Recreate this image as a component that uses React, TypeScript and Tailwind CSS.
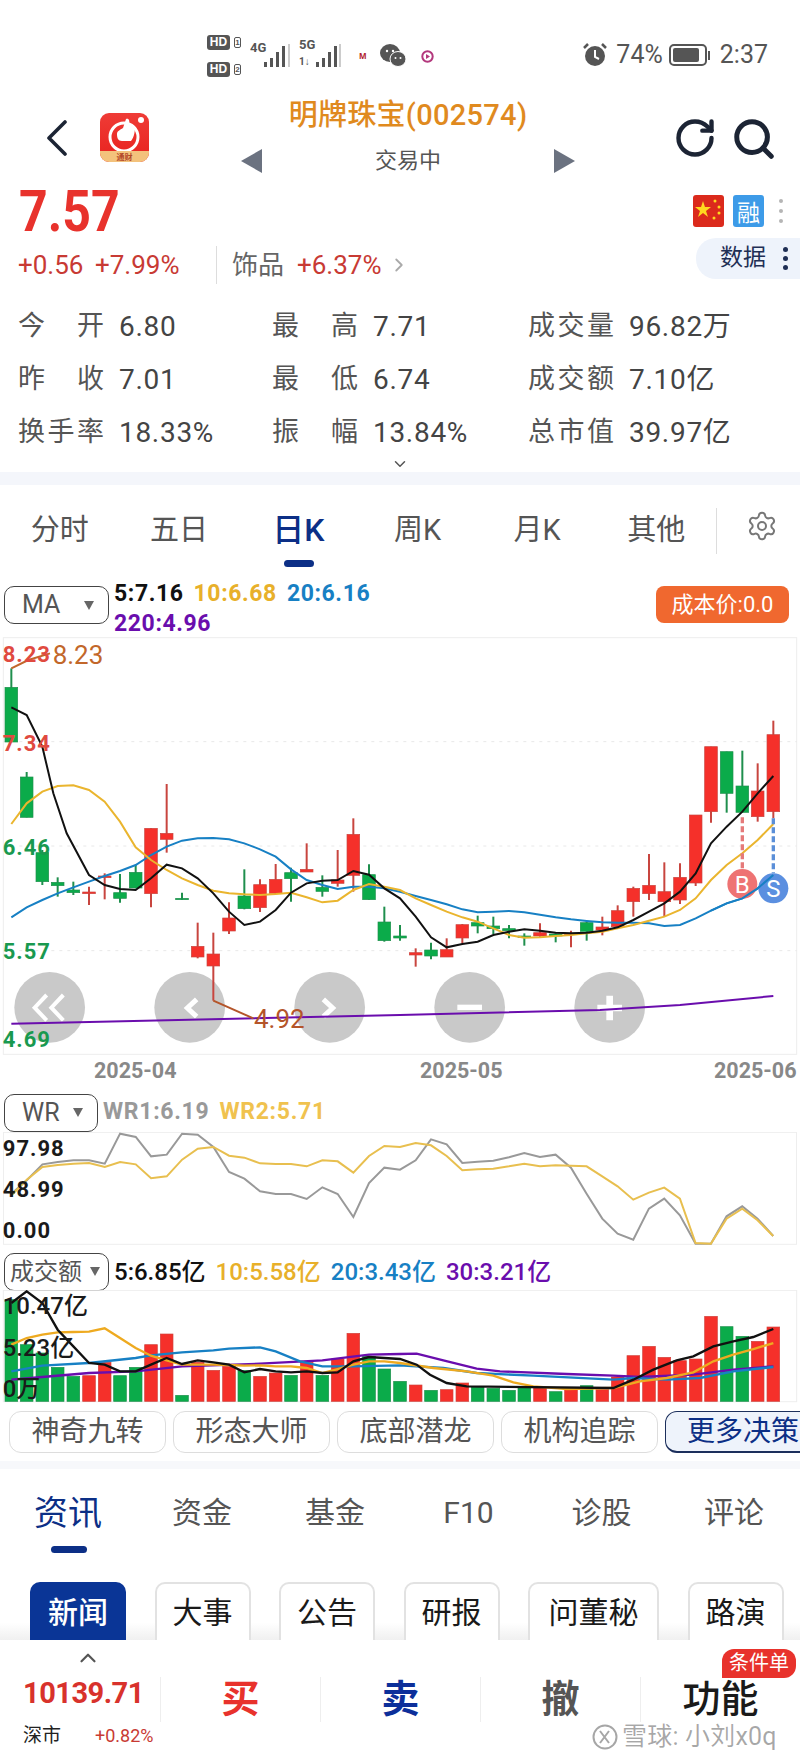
import { ChevronRight, ChevronDown, ChevronUp, RotateCw, Search, Settings } from "lucide-react";

const cjk = "font-['Roboto','Noto_Sans_CJK_SC',sans-serif]";
const RED = "#f5302a";
const GREEN = "#0bab4a";

// [x, up, high, top, bottom, low]
const candles: [number, number, number, number, number, number][] = [
  [34, 0, 295, 352, 516, 516], [80, 0, 606, 621, 742, 742], [127, 0, 840, 848, 935, 945], [173, 0, 922, 937, 947, 980],
  [220, 0, 935, 960, 968, 975], [267, 1, 950, 966, 971, 1005], [314, 1, 910, 918, 923, 988], [360, 0, 912, 968, 985, 998],
  [407, 0, 885, 907, 954, 955], [453, 1, 775, 775, 971, 1012], [500, 1, 642, 790, 808, 848], [546, 0, 968, 985, 989, 989],
  [593, 1, 1058, 1129, 1161, 1165], [640, 1, 1088, 1152, 1188, 1292], [687, 1, 997, 1044, 1083, 1092], [733, 0, 898, 978, 1016, 1018],
  [780, 1, 928, 944, 1013, 1026], [827, 1, 882, 928, 970, 972], [873, 0, 893, 908, 926, 995], [920, 1, 820, 898, 906, 906],
  [967, 0, 916, 952, 964, 980], [1013, 1, 840, 930, 940, 950], [1060, 1, 745, 793, 916, 965], [1107, 0, 883, 914, 989, 989],
  [1153, 0, 1010, 1056, 1112, 1115], [1200, 0, 1065, 1098, 1104, 1112], [1247, 1, 1135, 1148, 1155, 1190], [1293, 0, 1118, 1140, 1158, 1168],
  [1340, 1, 1105, 1139, 1161, 1161], [1387, 1, 1062, 1064, 1104, 1120], [1433, 0, 1037, 1058, 1068, 1090], [1480, 0, 1040, 1068, 1076, 1092],
  [1527, 0, 1065, 1076, 1082, 1105], [1573, 0, 1090, 1098, 1102, 1127], [1620, 1, 1060, 1088, 1098, 1100], [1667, 0, 1090, 1092, 1098, 1117],
  [1713, 1, 1082, 1090, 1094, 1132], [1760, 0, 1054, 1058, 1084, 1112], [1807, 1, 1040, 1071, 1080, 1096], [1853, 1, 1006, 1022, 1070, 1075],
  [1900, 1, 950, 955, 995, 1040], [1947, 1, 852, 946, 971, 990], [1993, 1, 877, 965, 995, 1040], [2040, 1, 880, 922, 990, 1002],
  [2087, 1, 735, 735, 939, 948], [2133, 1, 530, 530, 725, 758], [2180, 0, 545, 545, 670, 728], [2227, 0, 542, 648, 727, 727],
  [2273, 1, 580, 663, 740, 755], [2320, 1, 452, 494, 725, 745],
];

const ma5 = "34,412 80,435 127,530 160,670 200,790 267,915 314,945 360,957 407,960 453,925 500,884 546,895 593,925 640,970 687,1025 733,1065 780,1055 827,1020 873,968 920,940 967,932 1013,930 1060,903 1107,914 1153,955 1200,985 1247,1040 1293,1102 1340,1132 1387,1122 1433,1115 1480,1095 1527,1085 1573,1078 1620,1082 1667,1088 1713,1090 1760,1088 1807,1082 1853,1072 1900,1050 1947,1025 1993,1000 2040,965 2087,910 2133,820 2180,770 2227,725 2273,670 2320,618";
const ma10 = "34,762 80,700 127,665 173,648 220,646 267,660 314,695 360,755 407,832 453,870 500,900 546,925 593,945 640,962 687,970 733,973 780,975 827,972 873,968 920,982 967,997 1013,992 1060,960 1107,942 1153,950 1200,960 1247,985 1293,1005 1340,1025 1387,1042 1433,1055 1480,1075 1527,1095 1573,1103 1620,1102 1667,1098 1713,1095 1760,1090 1807,1085 1853,1075 1900,1065 1947,1052 1993,1040 2040,1020 2087,985 2133,930 2180,885 2227,850 2273,810 2320,762";
const ma20 = "34,1042 80,1012 127,990 173,970 220,952 267,935 314,918 360,903 407,885 453,855 500,830 546,812 593,805 640,804 687,808 733,820 780,838 827,860 873,898 920,930 967,945 1013,957 1060,950 1107,950 1153,955 1200,965 1247,978 1293,990 1340,1003 1387,1018 1433,1027 1480,1025 1527,1023 1573,1027 1620,1034 1667,1042 1713,1048 1760,1053 1807,1057 1853,1058 1900,1058 1947,1060 1993,1068 2040,1065 2087,1045 2133,1022 2180,1000 2227,985 2273,955 2320,915";
const ma220 = "34,1361 1200,1335 1800,1320 2040,1305 2320,1278";

const wr1 = "34,310 80,270 127,222 173,215 220,210 267,210 314,220 360,130 407,140 453,198 500,193 546,130 593,133 640,170 687,245 733,265 780,303 827,311 873,311 920,326 967,291 1013,311 1060,380 1107,278 1153,232 1200,238 1247,210 1293,147 1340,162 1387,218 1433,214 1480,211 1527,201 1573,188 1620,200 1667,193 1713,232 1760,310 1807,385 1853,430 1900,448 1947,355 1993,325 2040,375 2087,460 2133,460 2180,378 2227,348 2273,385 2320,437";
const wr2 = "34,315 80,268 127,230 173,224 220,220 267,218 314,230 360,215 407,222 453,264 500,258 546,208 593,175 640,170 687,196 733,202 780,219 827,221 873,221 920,228 967,210 1013,213 1060,247 1107,197 1153,167 1200,170 1247,158 1293,165 1340,197 1387,240 1433,237 1480,235 1527,228 1573,220 1620,228 1667,225 1713,226 1760,228 1807,258 1853,288 1900,328 1947,307 1993,292 2040,325 2087,458 2133,460 2180,385 2227,355 2273,390 2320,437";

const volTops = [630, 765, 790, 833, 860, 858, 818, 858, 833, 765, 733, 917, 818, 842, 830, 842, 860, 850, 857, 818, 857, 808, 731, 800, 838, 875, 886, 902, 900, 880, 892, 896, 902, 895, 895, 906, 900, 888, 900, 862, 798, 770, 803, 813, 808, 680, 711, 740, 755, 712];
const volUp = [0, 0, 0, 0, 0, 1, 1, 0, 0, 1, 1, 0, 1, 1, 1, 0, 1, 1, 0, 1, 0, 1, 1, 0, 0, 0, 1, 0, 1, 1, 0, 0, 0, 0, 1, 0, 1, 0, 1, 1, 1, 1, 1, 1, 1, 1, 0, 0, 1, 1];
const vol5 = "34,640 80,605 127,640 173,720 220,770 267,820 314,825 360,845 407,845 453,825 500,805 546,823 593,812 640,818 687,825 733,848 780,838 827,845 873,848 920,845 967,850 1013,848 1060,815 1107,802 1153,805 1200,808 1250,825 1290,855 1340,880 1400,890 1840,895 1900,870 1960,840 2030,812 2080,800 2140,770 2200,755 2260,742 2320,718";
const vol10 = "34,765 80,745 127,735 173,728 220,727 267,726 314,716 360,745 407,775 453,798 500,812 546,825 593,825 640,825 687,826 733,828 780,827 827,830 873,830 920,835 967,850 1013,838 1060,825 1107,815 1153,815 1200,820 1300,835 1400,845 1480,858 1540,878 1600,890 1700,898 1840,895 1920,875 2000,865 2080,848 2140,815 2200,795 2260,778 2320,760";
const vol20 = "34,845 127,828 267,820 407,805 453,797 546,788 640,782 687,777 780,773 827,785 900,815 967,830 1060,830 1200,827 1330,835 1430,850 1600,858 1840,870 1900,865 2000,870 2100,865 2200,845 2320,832";
const vol30 = "34,870 127,862 267,850 407,845 546,830 780,822 967,812 1107,795 1200,793 1250,792 1330,812 1430,837 1500,845 1700,853 1840,858 1920,862 2080,855 2200,840 2320,830";

function StatusBar() {
  return (
    <div className="h-[100px] pl-[207px] pr-[32px] pt-[35px] flex items-start text-[#555]">
      <div className="flex flex-col gap-[12px] w-[43px]">
        {[1, 2].map((n) => (
          <div key={n} className="flex items-center gap-[4px]">
            <span className="w-[23px] h-[15px] rounded-[3px] bg-[#555] text-white text-[12px] font-bold leading-[15px] text-center font-['Liberation_Sans',sans-serif]">HD</span>
            <span className="w-[7px] h-[11px] rounded-[2px] border border-[#555] text-[8px] font-bold leading-[9px] text-center font-['Liberation_Sans',sans-serif]">{n}</span>
          </div>
        ))}
      </div>
      <svg width="150" height="40" viewBox="0 0 150 40" className="shrink-0 -mt-[1px]">
        <g fill="#555" fontFamily="Roboto, sans-serif" fontSize="13" fontWeight="700">
          <text x="0" y="18">4G</text>
          <text x="49" y="15">5G</text>
          <text x="49" y="31" fontSize="10">1↓</text>
        </g>
        <g fill="#555">
          <rect x="14" y="28" width="3" height="5" /><rect x="20" y="24" width="3" height="9" /><rect x="26" y="18" width="3" height="15" /><rect x="32" y="12" width="3" height="21" />
          <rect x="38" y="10" width="2" height="23" fill="#ccc" />
          <rect x="66" y="28" width="3" height="5" /><rect x="72" y="24" width="3" height="9" /><rect x="78" y="18" width="3" height="15" /><rect x="84" y="12" width="3" height="21" />
          <rect x="89" y="10" width="2" height="23" fill="#ccc" />
        </g>
      </svg>
      <div className="flex items-center gap-[11px] -ml-[41px] mt-[6px] h-[30px]">
        <span className="w-[10px] text-[#b01c2e] text-[8px] font-bold leading-none">M</span>
        <svg width="26" height="24" viewBox="0 0 26 24">
          <ellipse cx="10" cy="9" rx="10" ry="9" fill="#555" />
          <ellipse cx="18" cy="15" rx="8" ry="7.5" fill="#555" stroke="#fff" strokeWidth="1" />
          <circle cx="7" cy="7" r="1.2" fill="#fff" /><circle cx="13" cy="7" r="1.2" fill="#fff" />
          <circle cx="15.5" cy="14" r="1" fill="#fff" /><circle cx="20.5" cy="14" r="1" fill="#fff" />
        </svg>
        <svg width="13" height="13" viewBox="0 0 13 13" className="ml-[4px]">
          <circle cx="6.5" cy="6.5" r="5.2" fill="none" stroke="#b3387d" strokeWidth="2" />
          <path d="M5 4l4 2.5L5 9z" fill="#b3387d" />
        </svg>
      </div>
      <div className="ml-auto flex items-center h-[44px] mt-[-2px] gap-[8px] font-['Roboto',sans-serif] text-[25px] text-[#555]">
        <svg width="26" height="26" viewBox="0 0 26 26">
          <circle cx="13" cy="14" r="10" fill="#555" />
          <path d="M13 8v7l4 2" stroke="#fff" strokeWidth="2" fill="none" />
          <path d="M2 6l4-4M24 6l-4-4" stroke="#555" strokeWidth="2.5" />
        </svg>
        <span>74%</span>
        <span className="flex items-center ml-[-2px]">
          <span className="w-[38px] h-[22px] rounded-[5px] border-2 border-[#555] p-[2px] flex"><span className="w-[26px] bg-[#555] rounded-[2px]" /></span>
          <span className="w-[2px] h-[9px] bg-[#555] ml-[1px]" />
        </span>
        <span className="ml-[2px]">2:37</span>
      </div>
    </div>
  );
}

function NavBar() {
  return (
    <div className="h-[84px] grid grid-cols-[226px_364px_1fr]">
      <div className="flex items-start pl-[46px]">
        <svg width="21" height="36" viewBox="0 0 21 36" className="mt-[20px]" fill="none" stroke="#1c2434" strokeWidth="3.6" strokeLinecap="round" strokeLinejoin="round">
          <path d="M19 2L3 18l16 16" />
        </svg>
        <div className="ml-[33px] mt-[13px] w-[49px] h-[49px] rounded-[9px] bg-[linear-gradient(#ef3b36,#e8221e)] overflow-hidden flex flex-col items-center">
          <svg width="49" height="38" viewBox="0 0 49 38">
            <ellipse cx="24" cy="24" rx="14" ry="14" fill="none" stroke="#fff" strokeWidth="3" />
            <path d="M22 28c-4 0-5-3-5-7 0-3 3-4 6-6l3-9c3-1 4 2 3 6l5 1c2 3 0 12-3 15z" fill="#fff" />
            <circle cx="41" cy="7" r="3" fill="#fff" />
          </svg>
          <span className="w-full flex-1 bg-[#f3c27c] text-[#b4492a] text-[8px] leading-[11px] text-center font-bold font-['Noto_Sans_CJK_SC',sans-serif]">通财</span>
        </div>
      </div>
      <div className="flex flex-col items-center">
        <div className={`h-[30px] text-[29px] leading-[30px] tracking-[0.3px] text-[#e08a1e] font-medium whitespace-nowrap ${cjk}`}>明牌珠宝(002574)</div>
        <div className="mt-[19px] w-[334px] h-[24px] flex items-center justify-between">
          <span className="w-0 h-0 border-y-[12px] border-y-transparent border-r-[21px] border-r-[#6b7280]" />
          <span className={`text-[22px] leading-[24px] text-[#555] ${cjk}`}>交易中</span>
          <span className="w-0 h-0 border-y-[12px] border-y-transparent border-l-[21px] border-l-[#6b7280]" />
        </div>
      </div>
      <div className="flex items-start pl-[83px] pt-[16px] gap-[14px] text-[#1c2434]">
        <RotateCw className="w-[44px] h-[44px] shrink-0" strokeWidth={2.4} />
        <Search className="w-[46px] h-[46px] shrink-0" strokeWidth={2.6} />
      </div>
    </div>
  );
}

function PriceBlock() {
  return (
    <div className="h-[105px]">
      <div className="h-[54px] pl-[19px] flex items-start">
        <span className="text-[50px] leading-[56px] font-bold text-[#e8322c] font-['Roboto',sans-serif] scale-y-[1.13]">7.57</span>
        <div className="ml-auto mr-[17px] mt-[11px] flex items-center">
          <svg width="31" height="32" viewBox="0 0 31 32" className="rounded-[3px]">
            <rect width="31" height="32" fill="#db2a1c" />
            <polygon points="10,6 12,12 18,12 13,16 15,22 10,18 5,22 7,16 2,12 8,12" fill="#ffd81f" />
            <circle cx="22" cy="6" r="1.5" fill="#ffd81f" /><circle cx="26" cy="12" r="1.5" fill="#ffd81f" /><circle cx="26" cy="18" r="1.5" fill="#ffd81f" /><circle cx="21" cy="23" r="1.5" fill="#ffd81f" />
          </svg>
          <span className="ml-[9px] w-[31px] h-[32px] rounded-[3px] bg-[#3d9be8] text-white text-[23px] leading-[32px] text-center font-['Noto_Sans_CJK_SC',sans-serif]">融</span>
          <span className="ml-[15px] flex flex-col gap-[6px]">
            <span className="w-[4px] h-[4px] rounded-full bg-[#b5b5b5]" /><span className="w-[4px] h-[4px] rounded-full bg-[#b5b5b5]" /><span className="w-[4px] h-[4px] rounded-full bg-[#b5b5b5]" />
          </span>
        </div>
      </div>
      <div className="pl-[18px] flex items-start">
        <div className={`mt-[9px] flex items-center h-[36px] text-[26px] text-[#c83a34] ${cjk}`}>
          <span className="w-[77px]">+0.56</span>
          <span className="w-[121px]">+7.99%</span>
          <span className="w-px h-[38px] bg-[#ddd] mr-[15px]" />
          <span className="text-[#666] w-[65px]">饰品</span>
          <span>+6.37%</span>
          <ChevronRight className="w-[22px] h-[22px] text-[#aaa] ml-[6px]" strokeWidth={2} />
        </div>
        <div className={`ml-auto w-[104px] h-[41px] rounded-l-[20px] bg-[#eef3fb] flex items-center pl-[24px] gap-[17px] text-[23px] text-[#1f2f55] ${cjk}`}>
          数据
          <span className="flex flex-col gap-[4px]">
            <span className="w-[5px] h-[5px] rounded-full bg-[#1f2f55]" /><span className="w-[5px] h-[5px] rounded-full bg-[#1f2f55]" /><span className="w-[5px] h-[5px] rounded-full bg-[#1f2f55]" />
          </span>
        </div>
      </div>
    </div>
  );
}

function Quote({ label, value }: { label: string; value: string }) {
  return (
    <div className="flex items-center h-[53px]">
      <span className="w-[86px] flex justify-between text-[#555] text-[27px]">
        {label.split("").map((c, i) => <span key={i}>{c}</span>)}
      </span>
      <span className="ml-[15px] text-[#444] text-[28px] tracking-[0.7px]">{value}</span>
    </div>
  );
}

function QuoteGrid() {
  const rows = [
    ["今开", "6.80", "最高", "7.71", "成交量", "96.82万"],
    ["昨收", "7.01", "最低", "6.74", "成交额", "7.10亿"],
    ["换手率", "18.33%", "振幅", "13.84%", "总市值", "39.97亿"],
  ];
  return (
    <div className={`pl-[18px] pt-[11px] ${cjk}`}>
      {rows.map((r, i) => (
        <div key={i} className="grid grid-cols-[254px_256px_1fr]">
          <Quote label={r[0]} value={r[1]} />
          <Quote label={r[2]} value={r[3]} />
          <Quote label={r[4]} value={r[5]} />
        </div>
      ))}
      <div className="h-[13px] flex justify-center pr-[18px]"><ChevronDown className="w-[18px] h-[18px] -mt-[4px] text-[#555]" strokeWidth={2} /></div>
    </div>
  );
}

function PeriodTabs() {
  const tabs = ["分时", "五日", "日K", "周K", "月K", "其他"];
  return (
    <div className="h-[98px] border-t-[13px] border-[#f4f6fb] flex items-start pt-[25px]">
      <div className={`w-[716px] grid grid-cols-6 text-[29px] leading-[40px] text-[#555] ${cjk}`}>
        {tabs.map((t, i) => (
          <span key={t} className={`relative text-center ${i === 2 ? "text-[#0c2f86] text-[32px] font-medium" : ""}`}>
            {t}
            {i === 2 && <span className="absolute left-[45px] top-[50px] w-[30px] h-[7px] rounded-full bg-[#0c2f86]" />}
          </span>
        ))}
      </div>
      <span className="w-px h-[46px] -mt-[2px] bg-[#ddd]" />
      <Settings className="ml-[29px] w-[32px] h-[32px] text-[#777]" strokeWidth={1.5} />
    </div>
  );
}

function SelectBox({ label, w, pad = "pl-[17px] pr-[14px]", text = "text-[25px]" }: { label: string; w: string; pad?: string; text?: string }) {
  return (
    <div className={`${w} ${pad} ${text} h-[38px] shrink-0 rounded-[10px] border border-[#444] flex items-center justify-between text-[#555] font-normal whitespace-nowrap tracking-normal ${cjk}`}>
      <span>{label}</span>
      <span className="w-0 h-0 border-x-[5px] border-x-transparent border-t-[9px] border-t-[#666]" />
    </div>
  );
}

function MainChart() {
  const grid = [515, 828, 1142];
  const buttons: [number, string][] = [[149, "«"], [569, "‹"], [989, "›"], [1409, "−"], [1829, "+"]];
  return (
    <svg viewBox="0 201 2400 1254" width="800" height="418" className="block" fontFamily="Roboto, sans-serif">
      <rect x="10" y="203" width="2380" height="1250" fill="none" stroke="#eee" strokeWidth="3" />
      {grid.map((y) => <line key={y} x1="10" x2="2390" y1={y} y2={y} stroke="#e8e8e8" strokeWidth="3" strokeDasharray="9 15" />)}
      {buttons.map(([x, g]) => (
        <g key={x}>
          <circle cx={x} cy="1312" r="106" fill="#c9c9c9" />
          {g === "«" && <path d="M140 1275l-36 38 36 38M190 1275l-36 38 36 38" fill="none" stroke="#fff" strokeWidth="12" />}
          {g === "‹" && <path d="M590 1288l-28 26 28 26" fill="none" stroke="#fff" strokeWidth="15" />}
          {g === "›" && <path d="M970 1288l28 26-28 26" fill="none" stroke="#fff" strokeWidth="15" />}
          {g === "−" && <rect x={x - 37} y="1304" width="74" height="16" fill="#fff" />}
          {g === "+" && <path d={`M${x - 37} 1314h74M${x} 1277v74`} stroke="#fff" strokeWidth="20" />}
        </g>
      ))}
      {candles.map(([x, up, hi, top, bot, lo]) => {
        const c = up ? RED : GREEN;
        const stroke = up ? "#c8453f" : "#1f8f4d";
        return (
          <g key={x}>
            <line x1={x} x2={x} y1={hi} y2={lo} stroke={stroke} strokeWidth="6" />
            <rect x={x - 19} y={top} width="38" height={Math.max(bot - top, 4)} fill={c} stroke={stroke} strokeWidth="2" />
          </g>
        );
      })}
      <polyline points={ma220} fill="none" stroke="#6a0dad" strokeWidth="6" />
      <polyline points={ma20} fill="none" stroke="#1780c4" strokeWidth="6" />
      <polyline points={ma10} fill="none" stroke="#eab52e" strokeWidth="6" />
      <polyline points={ma5} fill="none" stroke="#111" strokeWidth="6" />
      <polyline points="34,295 85,270 150,250" fill="none" stroke="#c2672a" strokeWidth="6" />
      <polyline points="640,1292 760,1345" fill="none" stroke="#b4552a" strokeWidth="6" />
      <text x="158" y="281" fontSize="78" fill="#c2672a">8.23</text>
      <text x="762" y="1375" fontSize="78" fill="#b4552a">4.92</text>
      <g fontSize="66" fontWeight="700" letterSpacing="3">
        <text x="8" y="276" fill="#e04a40">8.23</text>
        <text x="8" y="543" fill="#e04a40">7.34</text>
        <text x="8" y="854" fill="#19994f">6.46</text>
        <text x="8" y="1168" fill="#19994f">5.57</text>
        <text x="8" y="1432" fill="#19994f">4.69</text>
      </g>
      <line x1="2227" x2="2227" y1="742" y2="900" stroke="#e57a7a" strokeWidth="10" strokeDasharray="18 9" />
      <line x1="2320" x2="2320" y1="745" y2="910" stroke="#5b8fd8" strokeWidth="10" strokeDasharray="18 9" />
      <circle cx="2227" cy="942" r="45" fill="#ee7373" />
      <circle cx="2320" cy="955" r="45" fill="#5b8fe0" />
      <text x="2227" y="968" textAnchor="middle" fontSize="72" fill="#fff">B</text>
      <text x="2320" y="981" textAnchor="middle" fontSize="72" fill="#fff">S</text>
      <polyline points="2133,1022 2180,1000 2227,985 2273,955 2320,915" fill="none" stroke="#1780c4" strokeWidth="6" />
    </svg>
  );
}

function WrChart() {
  return (
    <svg viewBox="0 125 2400 340" width="800" height="113.3" className="block" fontFamily="Roboto, sans-serif">
      <rect x="10" y="126" width="2380" height="336" fill="none" stroke="#eee" strokeWidth="3" />
      <polyline points={wr1} fill="none" stroke="#999" strokeWidth="6" />
      <polyline points={wr2} fill="none" stroke="#e8bf4f" strokeWidth="6" />
      <g fontSize="66" fontWeight="700" fill="#1a1a1a" letterSpacing="3">
        <text x="8" y="197">97.98</text>
        <text x="8" y="320">48.99</text>
        <text x="8" y="443">0.00</text>
      </g>
    </svg>
  );
}

function VolumeChart() {
  return (
    <svg viewBox="0 601 2400 338" width="800" height="112.7" className="block" fontFamily="Roboto, 'Noto Sans CJK SC', sans-serif">
      <rect x="10" y="602" width="2380" height="334" fill="none" stroke="#eee" strokeWidth="3" />
      {candles.map(([x], i) => (
        <rect key={x} x={x - 19} y={volTops[i]} width="38" height={935 - volTops[i]} fill={volUp[i] ? RED : GREEN} stroke={volUp[i] ? "#d0423c" : "#1f8f4d"} strokeWidth="2" />
      ))}
      <polyline points={vol30} fill="none" stroke="#6a0dad" strokeWidth="7" />
      <polyline points={vol20} fill="none" stroke="#1780c4" strokeWidth="7" />
      <polyline points={vol10} fill="none" stroke="#eeaa20" strokeWidth="7" />
      <polyline points={vol5} fill="none" stroke="#111" strokeWidth="7" />
      <g fontSize="72" fontWeight="500" fill="#1a1a1a">
        <text x="8" y="674">10.47亿</text>
        <text x="8" y="800">5.23亿</text>
        <text x="8" y="922">0万</text>
      </g>
    </svg>
  );
}

function ChartArea() {
  return (
    <div>
      <div className={`h-[67px] pl-[4px] pt-[16px] pr-[11px] flex items-start text-[23px] leading-[30px] font-bold tracking-[0.6px] ${cjk}`}>
        <SelectBox label="MA" w="w-[105px]" />
        <div className="ml-[5px] -mt-[7px] flex flex-wrap w-[300px] gap-x-[10px]">
          <span className="text-[#111]">5:7.16</span>
          <span className="text-[#e8b02a]">10:6.68</span>
          <span className="text-[#1780c4]">20:6.16</span>
          <span className="text-[#6a0dad]">220:4.96</span>
        </div>
        <div className="ml-auto w-[133px] h-[37px] rounded-[8px] bg-[#f0682f] text-white text-[22px] font-normal leading-[37px] text-center tracking-normal">成本价:0.0</div>
      </div>
      <MainChart />
      <div className="h-[30px] pt-[2px] flex items-center pl-[94px] text-[21.5px] font-bold text-[#888] font-['Roboto',sans-serif]">
        <span className="w-[326px]">2025-04</span>
        <span className="w-[294px]">2025-05</span>
        <span>2025-06</span>
      </div>
      <div className={`mt-[8px] h-[39px] pl-[4px] flex items-center text-[23px] font-bold tracking-[0.7px] ${cjk}`}>
        <SelectBox label="WR" w="w-[94px]" />
        <span className="ml-[5px] text-[#999]">WR1:6.19</span>
        <span className="ml-[10px] text-[#f0c24f]">WR2:5.71</span>
      </div>
      <WrChart />
      <div className={`mt-[8px] h-[37px] pl-[4px] flex items-center text-[24px] font-medium ${cjk}`}>
        <SelectBox label="成交额" w="w-[105px]" pad="pl-[5px] pr-[8px]" text="text-[24px]" />
        <span className="ml-[5px] text-[#111]">5:6.85亿</span>
        <span className="ml-[10px] text-[#e8b02a]">10:5.58亿</span>
        <span className="ml-[10px] text-[#1780c4]">20:3.43亿</span>
        <span className="ml-[10px] text-[#6a0dad]">30:3.21亿</span>
      </div>
      <VolumeChart />
    </div>
  );
}

function StrategyPills() {
  const pills = ["神奇九转", "形态大师", "底部潜龙", "机构追踪"];
  return (
    <div className={`mt-[8px] h-[42px] pl-[9px] flex gap-[7px] overflow-hidden text-[28px] text-[#555] ${cjk}`}>
      {pills.map((p) => (
        <div key={p} className="w-[157px] shrink-0 rounded-[12px] border border-[#ddd] flex items-center justify-center">{p}</div>
      ))}
      <div className="w-[170px] shrink-0 rounded-[12px] border border-[#1c2f5c] border-b-2 bg-[#eef3fb] text-[#0c2f86] pl-[21px] leading-[40px] whitespace-nowrap">更多决策</div>
    </div>
  );
}

function InfoTabs() {
  const tabs = ["资讯", "资金", "基金", "F10", "诊股", "评论"];
  return (
    <div className={`mt-[8px] h-[94px] border-t-[8px] border-[#f7f8fb] grid grid-cols-[136px_132px_134px_133px_133px_1fr] pt-[22px] text-[30px] text-[#555] ${cjk}`}>
      {tabs.map((t, i) => (
        <span key={t} className={`relative text-center h-[44px] leading-[44px] ${i === 0 ? "text-[#0c2f86] text-[34px]" : ""}`}>
          {t}
          {i === 0 && <span className="absolute left-[51px] top-[55px] w-[36px] h-[7px] rounded-full bg-[#0c2f86]" />}
        </span>
      ))}
    </div>
  );
}

function NewsFilter() {
  const items: [string, string][] = [["大事", "w-[96px]"], ["公告", "w-[96px]"], ["研报", "w-[96px]"], ["问董秘", "w-[131px]"], ["路演", "w-[96px]"]];
  return (
    <div className={`mt-[27px] h-[58px] pl-[30px] flex gap-[28.5px] overflow-hidden text-[30px] text-[#1a1a1a] bg-[linear-gradient(#fff_70%,#f0f0f0)] ${cjk}`}>
      <div className="w-[96px] h-[70px] shrink-0 rounded-[10px] bg-[#0a3596] text-white font-medium text-center leading-[62px]">新闻</div>
      {items.map(([t, w]) => (
        <div key={t} className={`${w} h-[70px] shrink-0 rounded-[10px] border-2 border-[#e2e2e2] bg-white text-center leading-[58px]`}>{t}</div>
      ))}
    </div>
  );
}

function BottomBar() {
  const actions: [string, string][] = [["买", "text-[#e8322c] font-bold"], ["卖", "text-[#0c2f9a] font-bold"], ["撤", "text-[#555] font-bold"], ["功能", "text-[#1a1a1a] font-medium"]];
  return (
    <div className={`relative flex-1 bg-white grid grid-cols-[160px_160px_160px_160px_160px] ${cjk}`}>
      <div className="pl-[23px] pt-[5px] flex flex-col">
        <ChevronUp className="ml-[52px] w-[26px] h-[26px] text-[#555]" strokeWidth={2} />
        <div className="mt-[3px] h-[38px] leading-[38px] text-[29px] font-bold text-[#d8322c] tracking-[-0.5px] whitespace-nowrap">10139.71</div>
        <div className="mt-[12px] flex items-center h-[24px]">
          <span className="w-[72px] text-[19px] text-[#222]">深市</span>
          <span className="text-[18px] text-[#c83a34]">+0.82%</span>
        </div>
      </div>
      {actions.map(([t, c]) => (
        <div key={t} className={`mt-[37px] h-[45px] border-l border-[#eee] flex items-center justify-center text-[38px] ${c}`}>{t}</div>
      ))}
      <span className="absolute left-[722px] top-[9px] w-[74px] h-[29px] rounded-[12px] rounded-bl-none bg-[#e8322c] text-white text-[20px] leading-[29px] text-center">条件单</span>
      <div className="absolute left-[592px] top-[78px] flex items-center gap-[4px] text-[#000]/35 text-[25px] tracking-[0.2px]">
        <svg width="26" height="26" viewBox="0 0 26 26" fill="none" stroke="#000" strokeOpacity="0.35" strokeWidth="2">
          <circle cx="13" cy="13" r="11.5" />
          <path d="M8 7l9 12M17 7l-9 12" />
        </svg>
        <span>雪球: 小刘x0q</span>
      </div>
    </div>
  );
}

export default function App() {
  return (
    <div className="w-[800px] h-[1760px] bg-white overflow-hidden flex flex-col">
      <StatusBar />
      <NavBar />
      <PriceBlock />
      <QuoteGrid />
      <PeriodTabs />
      <ChartArea />
      <StrategyPills />
      <InfoTabs />
      <NewsFilter />
      <BottomBar />
    </div>
  );
}
